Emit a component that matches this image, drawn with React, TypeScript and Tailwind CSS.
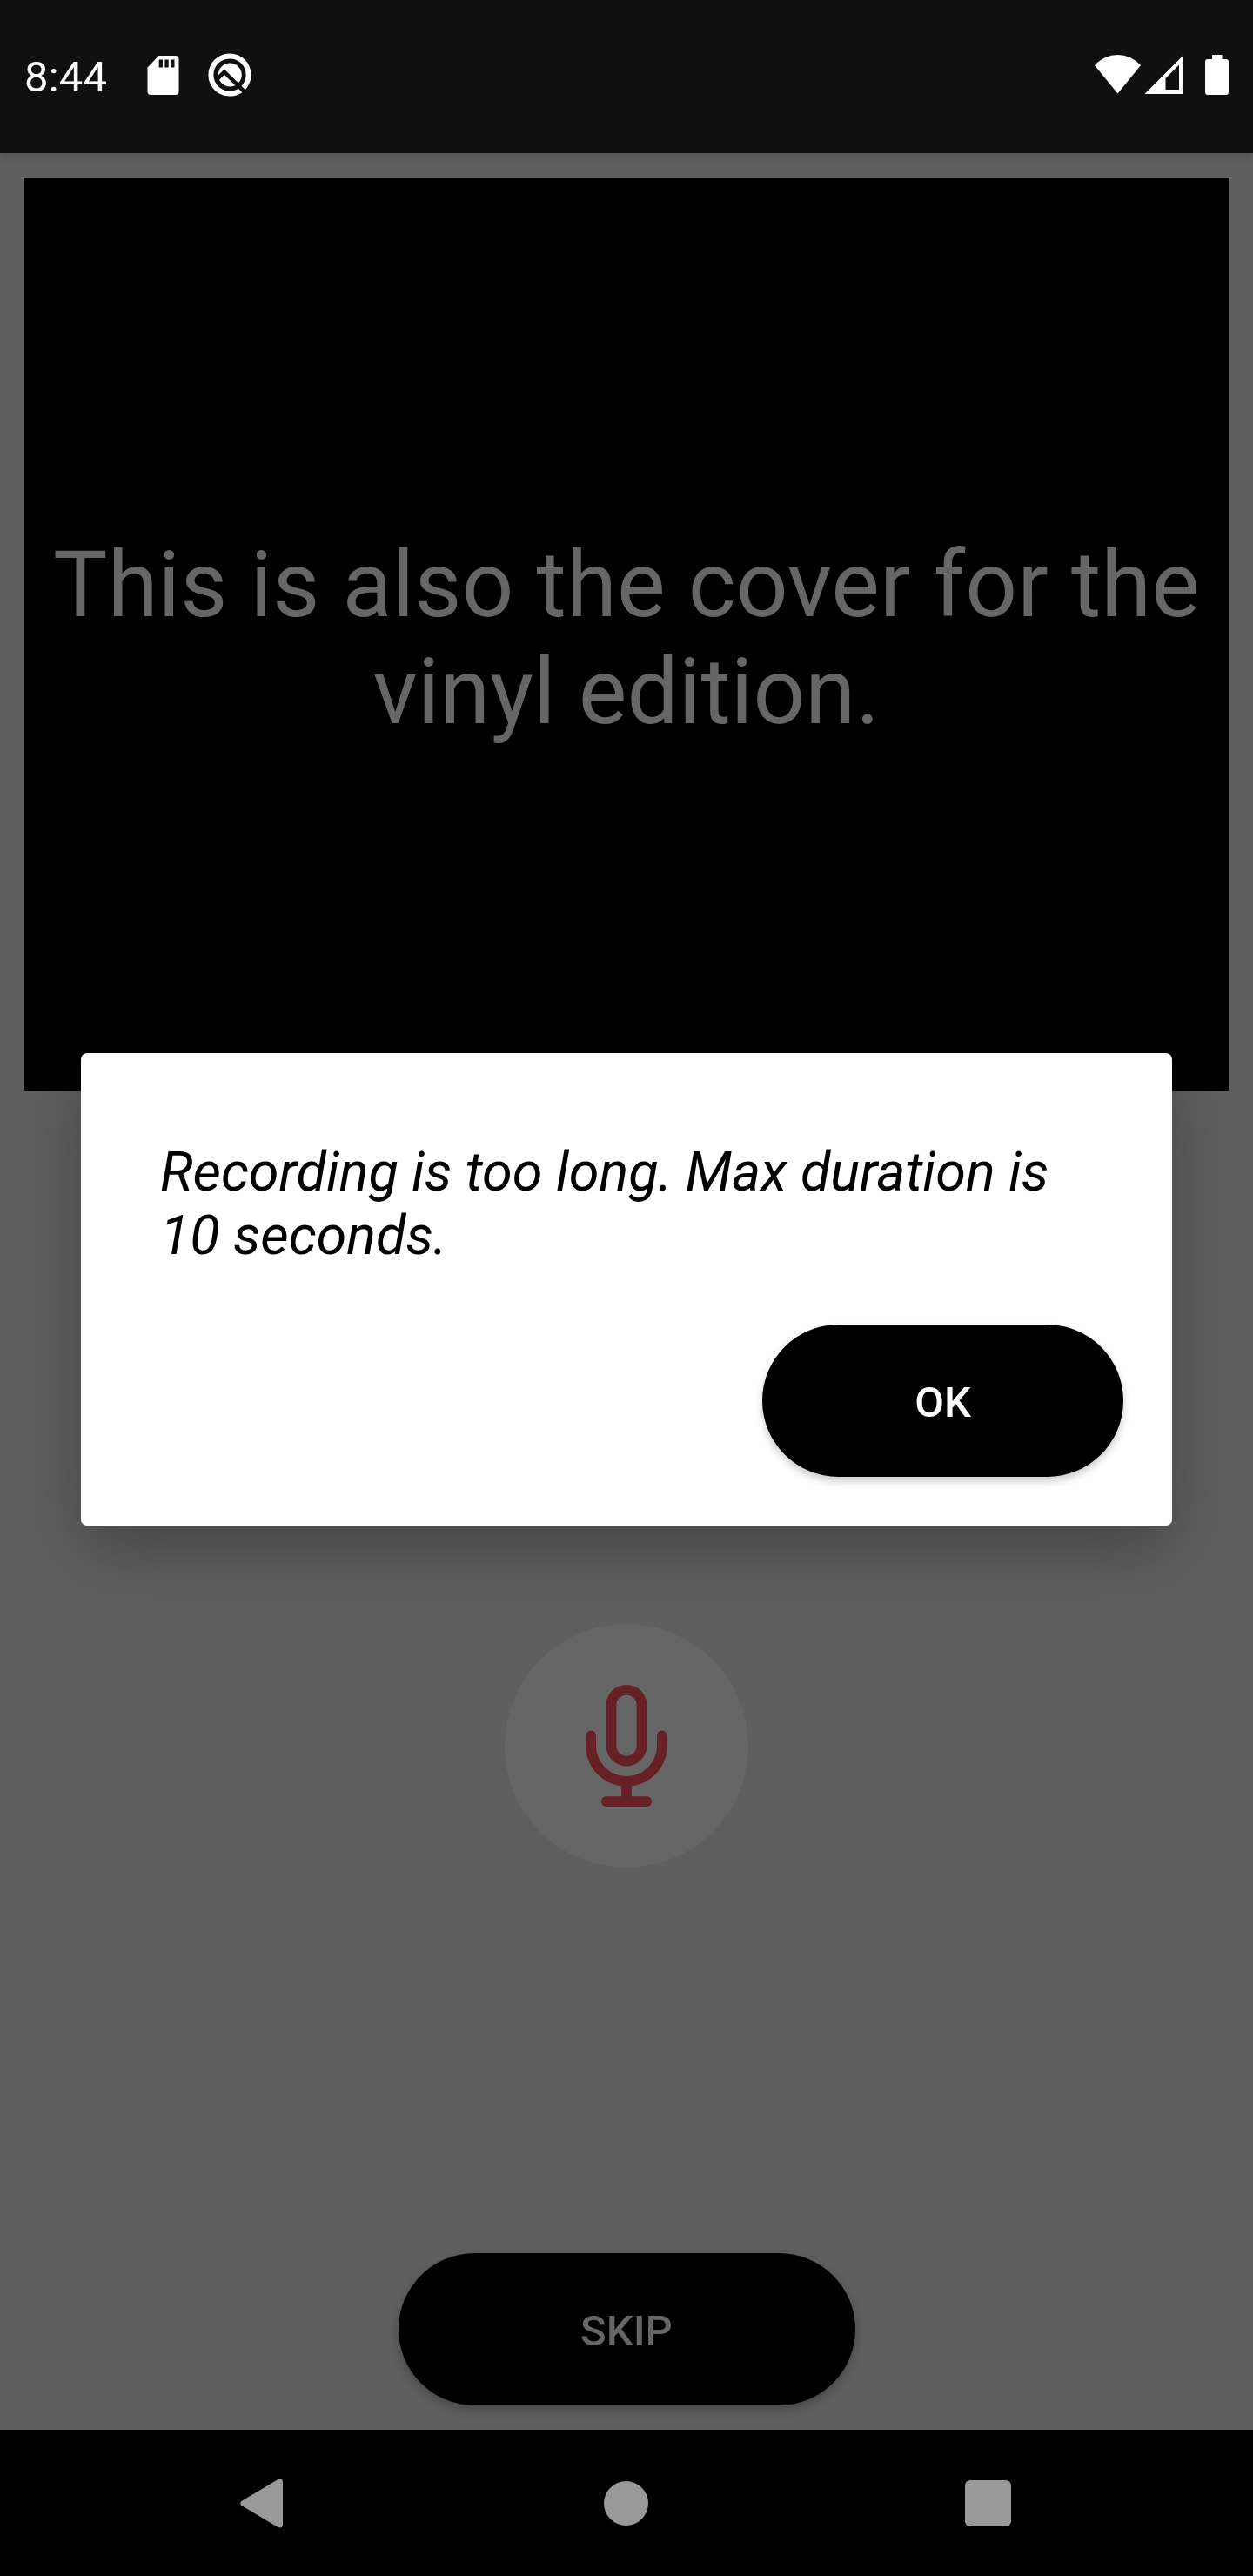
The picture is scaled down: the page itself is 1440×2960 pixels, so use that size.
function StatusBar() {
  return (
    <header className="relative flex h-[176px] shrink-0 items-start justify-between bg-[#101010] px-7 pt-[59px] text-white shadow-[0_4px_14px_rgba(0,0,0,0.12)]">
      <div className="flex items-start">
        <span className="mt-px w-[141px] whitespace-nowrap text-[49px] leading-[57px] tracking-[0.2px]">8:44</span>
        <svg className="mt-[5px] h-[45px] w-[37px]" viewBox="0 0 37 45" fill="none">
          <path d="M13.5 0H32.5Q36.5 0 36.5 4V41Q36.5 45 32.5 45H4.500Q.5 45 .5 41V13.500Z" fill="#fff" />
          <path d="M13.700 4.500h4.300v9h-4.300zM20.400 4.500h4.300v9h-4.300zM27.200 4.500h4.300v9h-4.300z" fill="#101010" />
        </svg>
        <svg className="ml-[33px] mt-[2px] h-[50px] w-[50px]" viewBox="0 0 50 50" fill="none">
          <circle cx="25" cy="25" r="21.600" stroke="#fff" strokeWidth="6" />
          <circle cx="25.300" cy="25" r="13.500" fill="#fff" />
          <path d="M10.500 30L18.800 21.700L46 48.500" stroke="#101010" strokeWidth="4.600" />
        </svg>
      </div>
      <div className="flex items-start pt-1">
        <svg className="h-[45px] w-[53px]" viewBox="0 0 53 45" fill="#fff">
          <path d="M26.500 44.500L0 12Q11.500 0 26.500 0T53 12Z" />
        </svg>
        <svg className="ml-[4px] h-[45px] w-[45px]" viewBox="0 0 45 45" fill="#fff" fillRule="evenodd">
          <path d="M45 .5V45H.5ZM40 11.500L24.500 27V40H40Z" />
        </svg>
        <svg className="ml-[25px] h-[46px] w-[27px]" viewBox="0 0 27 46" fill="#fff">
          <path d="M8 0H19.500V5H24Q27 5 27 8V43Q27 46 24 46H3Q0 46 0 43V8Q0 5 3 5H8Z" />
        </svg>
      </div>
    </header>
  );
}

function MicButton() {
  return (
    <button className="flex h-[280px] w-[280px] items-center justify-center rounded-full bg-[#666666]">
      <svg className="h-[140px] w-[94px]" viewBox="0 0 16 24" fill="none" stroke="#662026" strokeWidth="2" strokeLinecap="round">
        <rect x="5" y="1" width="6" height="14" rx="3" />
        <path d="M1 10v2a7 7 0 0 0 14 0v-2M8 19v4M4 23h8" />
      </svg>
    </button>
  );
}

function NavigationBar() {
  return (
    <nav className="grid h-[168px] shrink-0 grid-cols-[1fr_51px_1fr] items-center bg-black pl-[276px] pr-[278px]">
      <svg className="h-[57px] w-[50px]" viewBox="0 0 50 57" fill="#999">
        <path d="M1.500 26L43.500 1Q49 -.8 49 4.500V52.500Q49 57.800 43.500 56L1.500 31Q-1 28.500 1.500 26Z" />
      </svg>
      <div className="h-[51px] w-[51px] rounded-full bg-[#999999]" />
      <div className="h-[53px] w-[53px] justify-self-end rounded-[6px] bg-[#999999]" />
    </nav>
  );
}

function MessageDialog() {
  return (
    <div className="absolute inset-0 flex items-start justify-center pt-[1210px]">
      <div className="flex h-[543px] w-[1254px] flex-col justify-between rounded-[7px] bg-white pb-14 pl-[91px] pr-14 pt-[100px] shadow-[0_28px_80px_rgba(0,0,0,0.28)]">
        <p className="text-[63px] italic leading-[73px] tracking-[-0.08px] text-black">
          Recording is too long. Max duration is
          <br />
          10 seconds.
        </p>
        <button className="h-[175px] w-[415px] self-end rounded-full bg-black pt-[4px] text-[49px] font-medium text-white shadow-[0_5px_10px_rgba(0,0,0,0.2)]">
          OK
        </button>
      </div>
    </div>
  );
}

export default function App() {
  return (
    <div className="relative flex h-[2960px] w-[1440px] flex-col overflow-hidden bg-[#5f5f5f] font-['Roboto',sans-serif]">
      <StatusBar />
      <main className="flex flex-1 flex-col items-center justify-between px-7 py-7">
        <section className="flex h-[1050px] w-full items-center justify-center bg-black pt-[9px] text-center text-[105px] leading-[123px] tracking-[0.06px] text-[#666666]">
          <p className="whitespace-nowrap">
            This is also the cover for the
            <br />
            vinyl edition.
          </p>
        </section>
        <div className="mt-[169px]">
          <MicButton />
        </div>
        <button className="h-[175px] w-[525px] rounded-full bg-black pt-[4px] text-[49px] font-medium text-[#666666] shadow-[0_5px_12px_rgba(0,0,0,0.25)]">
          SKIP
        </button>
      </main>
      <NavigationBar />
      <MessageDialog />
    </div>
  );
}
